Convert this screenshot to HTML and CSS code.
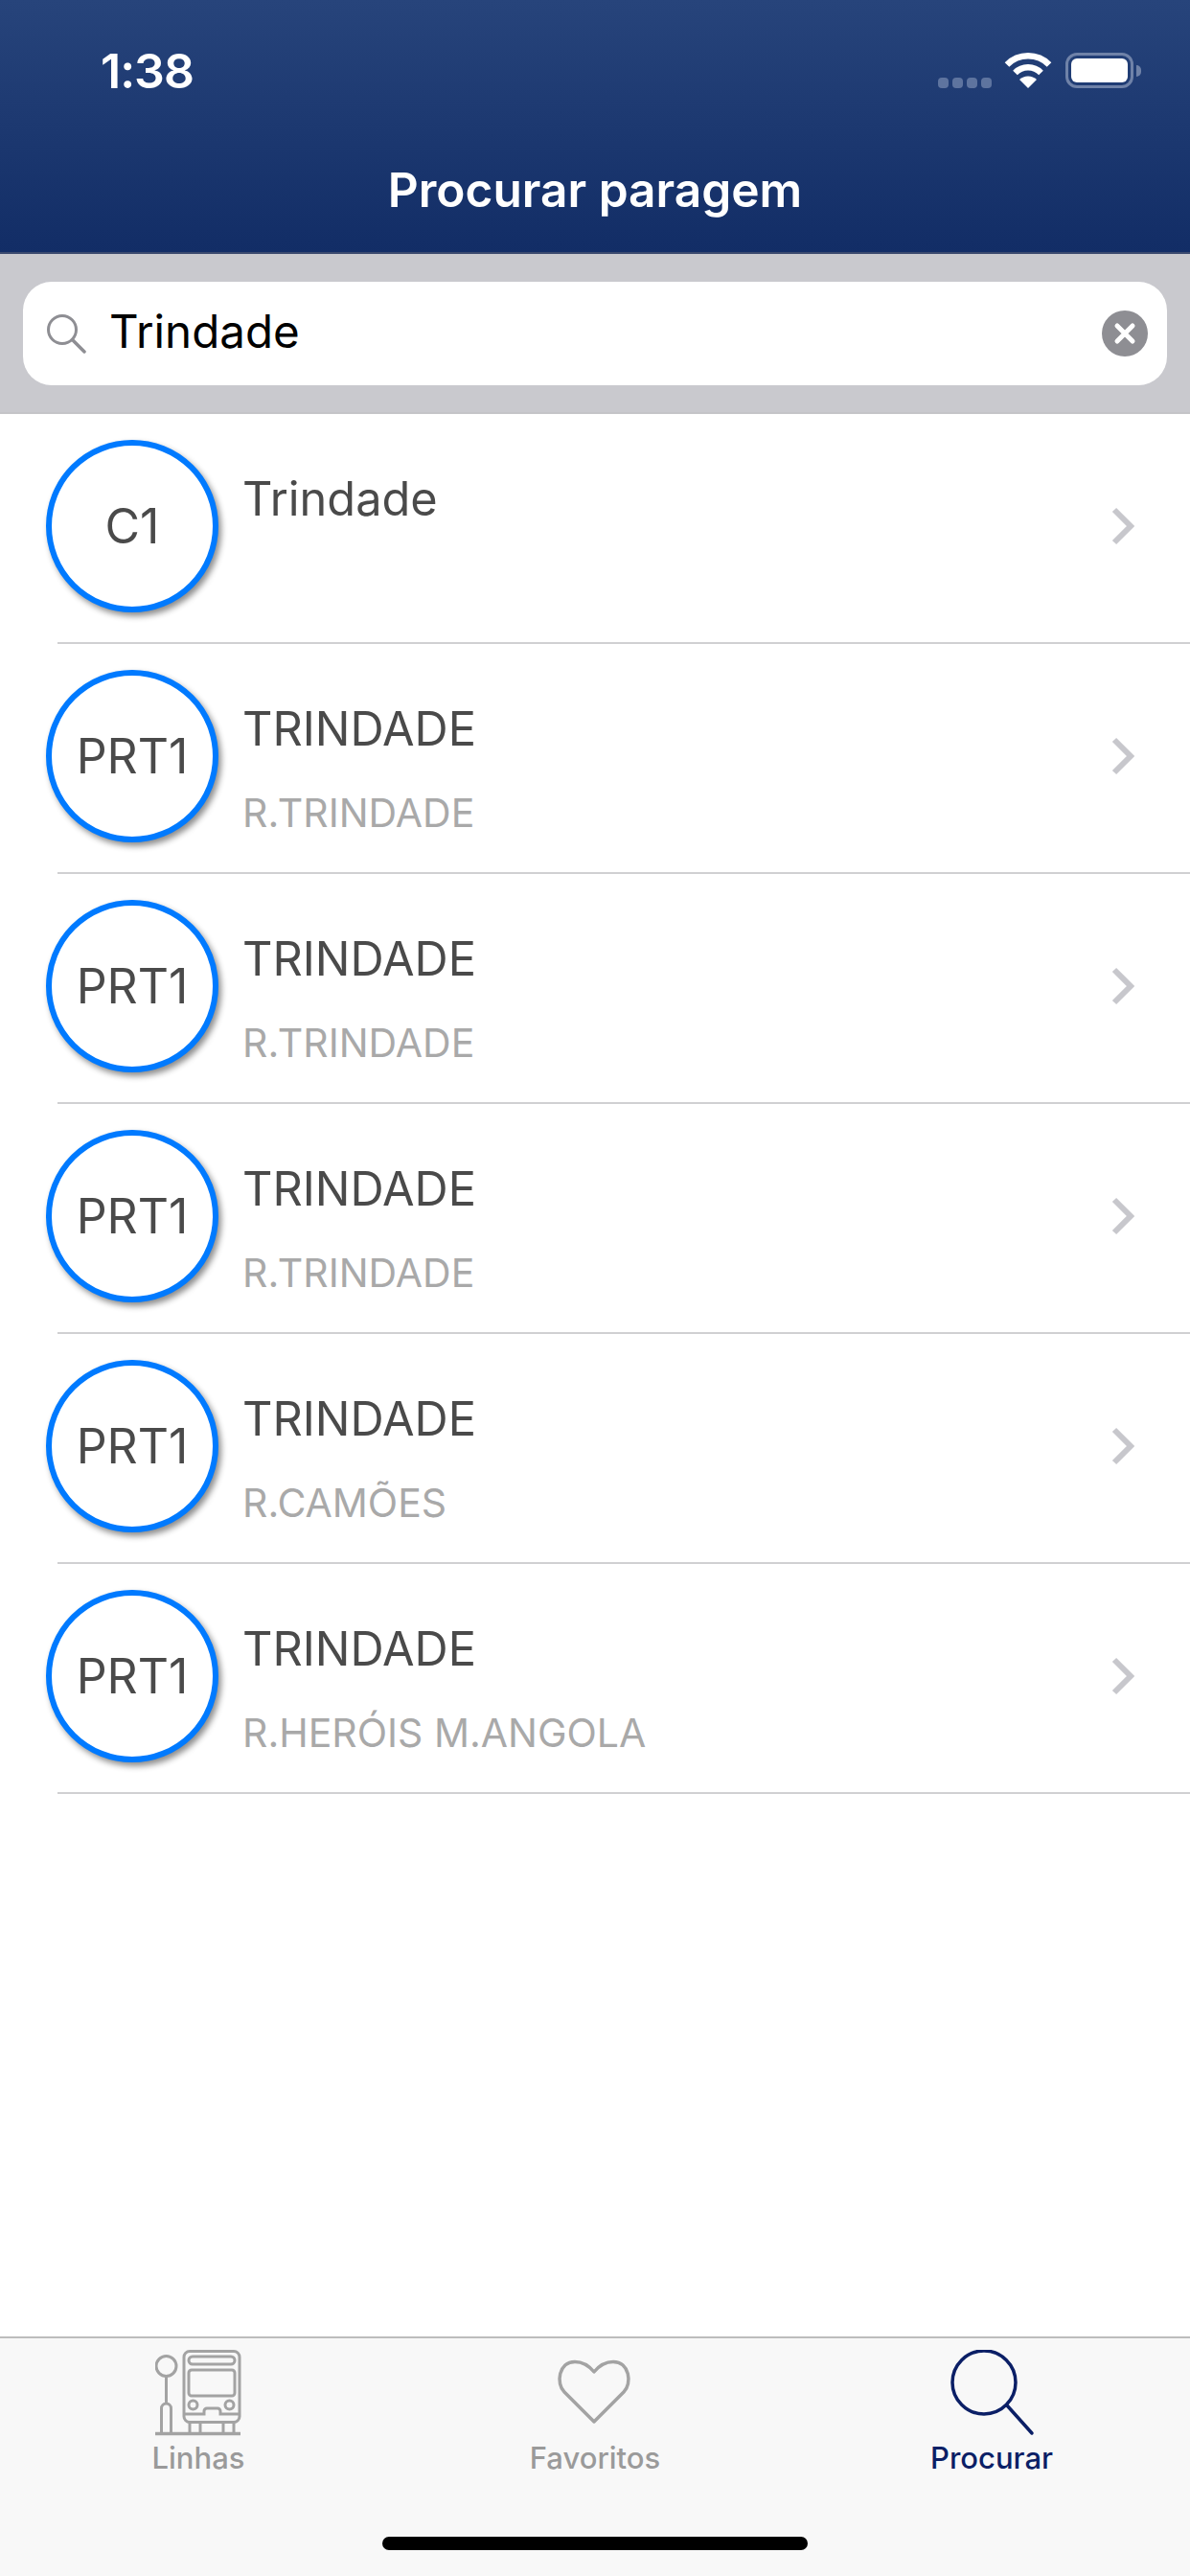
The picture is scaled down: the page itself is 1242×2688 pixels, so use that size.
FILE: index.html
```html
<!DOCTYPE html>
<html lang="pt">
<head>
<meta charset="utf-8">
<title>Procurar paragem</title>
<link rel="stylesheet" href="styles.css">
</head>
<body>
<div class="page">
  <header class="header">
    <div class="status">
      <span class="time">1:38</span>
      <div class="status-icons">
        <div class="signal"><i></i><i></i><i></i><i></i></div>
        <svg class="wifi" viewBox="0 0 50 37"><path d="M3 12.5a31 31 0 0 1 44 0M11.5 21a19 19 0 0 1 27 0" fill="none" stroke="#fff" stroke-width="6.5"/><path d="M16 28a13 13 0 0 1 18 0L25 37z" fill="#fff"/></svg>
        <div class="battery"><div class="battery-shell"><div class="battery-fill"></div></div><div class="battery-nub"></div></div>
      </div>
    </div>
    <h1 class="title">Procurar paragem</h1>
  </header>

  <div class="searchbar">
    <div class="field">
      <svg class="field-icon" viewBox="0 0 42 42"><circle cx="17" cy="17" r="14.5" fill="none" stroke="#8e8e93" stroke-width="3"/><path d="M27.5 27.5L40 40" stroke="#8e8e93" stroke-width="3.5" stroke-linecap="round"/></svg>
      <span class="field-text">Trindade</span>
      <svg class="clear" viewBox="0 0 48 48"><circle cx="24" cy="24" r="24" fill="#8e8e93"/><path d="M16 16l16 16M32 16L16 32" stroke="#fff" stroke-width="5" stroke-linecap="round"/></svg>
    </div>
  </div>

  <main class="list">
    <div class="row">
      <div class="badge">C1</div>
      <div class="info"><div class="name">Trindade</div></div>
      <svg class="chev" viewBox="0 0 26 40"><path d="M3 3l17 17L3 37" fill="none" stroke="#c7c7cc" stroke-width="6"/></svg>
    </div>
    <div class="row">
      <div class="badge">PRT1</div>
      <div class="info"><div class="name">TRINDADE</div><div class="sub">R.TRINDADE</div></div>
      <svg class="chev" viewBox="0 0 26 40"><path d="M3 3l17 17L3 37" fill="none" stroke="#c7c7cc" stroke-width="6"/></svg>
    </div>
    <div class="row">
      <div class="badge">PRT1</div>
      <div class="info"><div class="name">TRINDADE</div><div class="sub">R.TRINDADE</div></div>
      <svg class="chev" viewBox="0 0 26 40"><path d="M3 3l17 17L3 37" fill="none" stroke="#c7c7cc" stroke-width="6"/></svg>
    </div>
    <div class="row">
      <div class="badge">PRT1</div>
      <div class="info"><div class="name">TRINDADE</div><div class="sub">R.TRINDADE</div></div>
      <svg class="chev" viewBox="0 0 26 40"><path d="M3 3l17 17L3 37" fill="none" stroke="#c7c7cc" stroke-width="6"/></svg>
    </div>
    <div class="row">
      <div class="badge">PRT1</div>
      <div class="info"><div class="name">TRINDADE</div><div class="sub">R.CAMÕES</div></div>
      <svg class="chev" viewBox="0 0 26 40"><path d="M3 3l17 17L3 37" fill="none" stroke="#c7c7cc" stroke-width="6"/></svg>
    </div>
    <div class="row">
      <div class="badge">PRT1</div>
      <div class="info"><div class="name">TRINDADE</div><div class="sub">R.HERÓIS M.ANGOLA</div></div>
      <svg class="chev" viewBox="0 0 26 40"><path d="M3 3l17 17L3 37" fill="none" stroke="#c7c7cc" stroke-width="6"/></svg>
    </div>
  </main>

  <footer class="tabbar">
    <nav class="tabs">
      <div class="tab">
        <svg class="tab-icon" viewBox="0 0 90 90" fill="none" stroke="#a3a3a3" stroke-width="3">
          <circle cx="11.5" cy="17" r="10.5"/>
          <path d="M11.5 27.5V56M6.5 87V61a5 5 0 0 1 10 0V87"/>
          <path d="M0 87.5H89" stroke-width="3.5"/>
          <rect x="30" y="1.5" width="58" height="74" rx="6"/>
          <rect x="35" y="7" width="48" height="8" rx="4"/>
          <rect x="35" y="21" width="48" height="27" rx="3"/>
          <circle cx="39.5" cy="57.5" r="4.5"/>
          <circle cx="77.5" cy="57.5" r="4.5"/>
          <path d="M30 67H51V64a3 3 0 0 1 3-3H65a3 3 0 0 1 3 3V67H88"/>
          <path d="M36 75.5V87M47 75.5V87M71 75.5V87M82 75.5V87"/>
        </svg>
        <span class="tab-label">Linhas</span>
      </div>
      <div class="tab">
        <svg class="tab-icon" viewBox="0 0 90 90" fill="none"><path d="M44 75L13 44C4 35 7 12.5 24 12.5C32 12.5 39 17 44 23C49 17 56 12.5 64 12.5C81 12.5 84 35 75 44Z" stroke="#a3a3a3" stroke-width="3.5" stroke-linejoin="round"/></svg>
        <span class="tab-label">Favoritos</span>
      </div>
      <div class="tab active">
        <svg class="tab-icon" viewBox="0 0 90 90" fill="none" stroke="#0b1f66" stroke-width="3.5"><circle cx="37" cy="34" r="33"/><path d="M61 58L87 87" stroke-linecap="round"/></svg>
        <span class="tab-label">Procurar</span>
      </div>
    </nav>
    <div class="home"></div>
  </footer>
</div>
</body>
</html>
```

FILE: styles.css
```css
* { box-sizing: border-box; }
html, body { margin: 0; padding: 0; background: #fff; }
body { font-family: Inter, "Noto Sans", "Liberation Sans", sans-serif; }

.page {
  width: 1242px;
  height: 2688px;
  display: flex;
  flex-direction: column;
  overflow: hidden;
}

.header {
  height: 265px;
  flex: none;
  background: linear-gradient(#27447b, #122d66);
  border-bottom: 2px solid #3b4a6e;
  color: #fff;
}
.status {
  height: 150px;
  padding: 55px 51px 0 105px;
  display: flex;
  justify-content: space-between;
  align-items: flex-start;
}
.time {
  font-size: 50px;
  font-weight: 600;
  line-height: 39px;
  letter-spacing: -1px;
}
.status-icons { display: flex; align-items: flex-start; }
.signal { display: flex; gap: 4px; margin: 26px 13px 0 0; }
.signal i { width: 11px; height: 11px; border-radius: 4px; background: #5e749f; }
.wifi { width: 50px; height: 37px; margin-right: 14px; }
.battery { display: flex; align-items: center; height: 37px; }
.battery-shell {
  width: 71px;
  height: 37px;
  padding: 3px;
  border: 3px solid #6f82a8;
  border-radius: 12px;
}
.battery-fill { width: 100%; height: 100%; background: #fff; border-radius: 6px; }
.battery-nub { width: 5px; height: 12px; margin-left: 3px; background: #6f82a8; border-radius: 0 5px 5px 0; }

.title {
  margin: 0;
  text-align: center;
  font-size: 49.6px;
  font-weight: 600;
  line-height: 96px;
}

.searchbar {
  height: 167px;
  flex: none;
  padding: 29px 24px 0;
  background: #c9c9ce;
  border-bottom: 2px solid #c4c4c8;
}
.field {
  height: 108px;
  background: #fff;
  border-radius: 30px;
  display: flex;
  align-items: center;
  padding: 0 20px 0 24px;
}
.field-icon { width: 42px; height: 42px; flex: none; }
.field-text { margin: 0 0 4px 24px; flex: 1; font-size: 47.5px; color: #000; line-height: 104px; }
.clear { width: 48px; height: 48px; flex: none; }

.list { flex: 1; }
.row {
  height: 240px;
  display: flex;
  align-items: flex-start;
  padding: 27px 56px 0 48px;
  background: linear-gradient(#d0d0d2, #d0d0d2) 60px 100% / 100% 2px no-repeat;
}
.badge {
  width: 180px;
  height: 180px;
  flex: none;
  border: 6px solid #007aff;
  border-radius: 50%;
  background: #fff;
  box-shadow: 3px 4px 6px rgba(0, 0, 0, .45);
  display: flex;
  align-items: center;
  justify-content: center;
  font-size: 50px;
  color: #4a4a4a;
}
.info { flex: 1; margin-left: 25px; padding-top: 37px; }
.name { font-size: 48.7px; line-height: 50px; color: #4a4a4a; }
.sub { margin-top: 40px; font-size: 41px; line-height: 44px; color: #a9a9a9; }
.chev { width: 26px; height: 40px; flex: none; margin-top: 70px; }

.tabbar {
  height: 250px;
  flex: none;
  background: #f8f8f8;
  border-top: 2px solid #bdbdbd;
  display: flex;
  flex-direction: column;
  align-items: center;
}
.tabs {
  width: 100%;
  display: grid;
  grid-template-columns: repeat(3, 1fr);
  padding-top: 12px;
}
.tab { display: flex; flex-direction: column; align-items: center; color: #9a9a9a; }
.tab.active { color: #0b1f66; }
.tab-icon { width: 90px; height: 90px; }
.tab-label { margin-top: 5px; font-size: 31px; font-weight: 500; line-height: 36px; }
.home {
  width: 444px;
  height: 14px;
  margin-top: 64px;
  border-radius: 7px;
  background: #000;
}
```
